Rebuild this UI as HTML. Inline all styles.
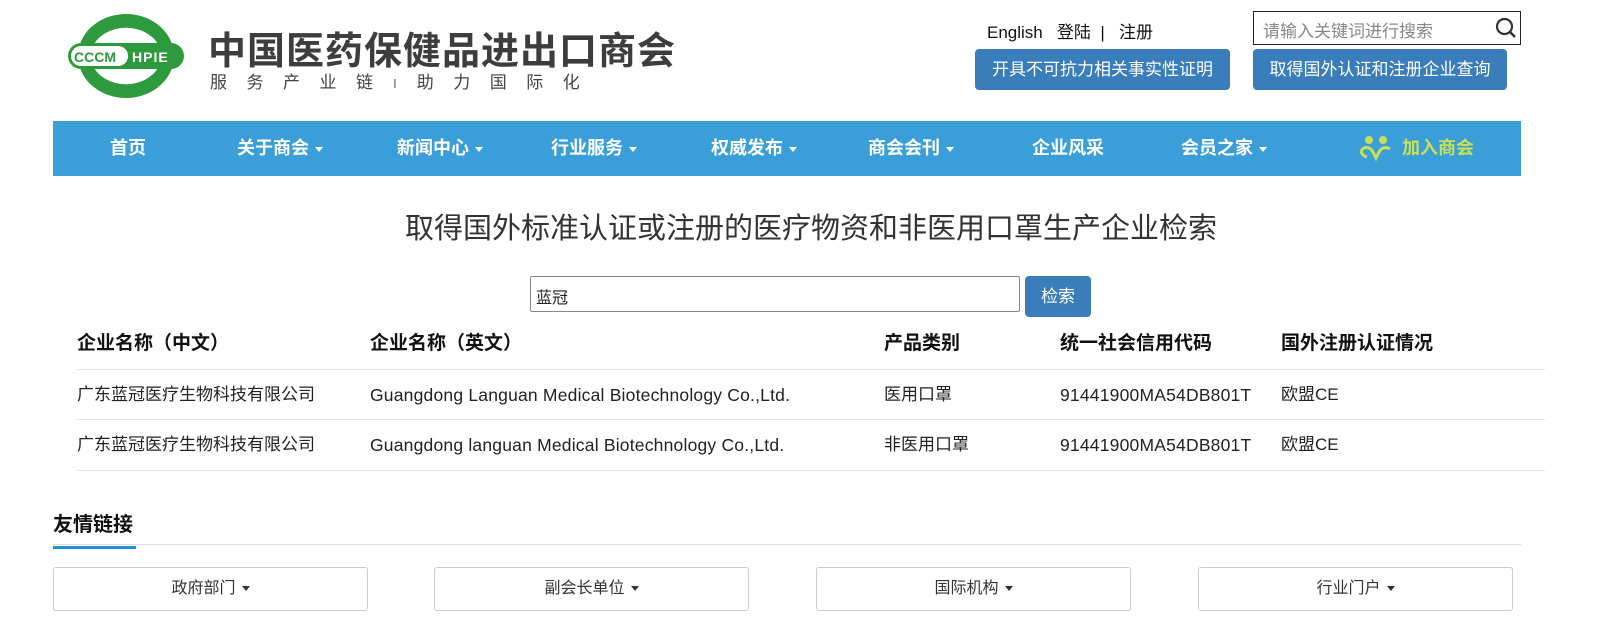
<!DOCTYPE html>
<html><head><meta charset="utf-8">
<style>
*{margin:0;padding:0;box-sizing:border-box}
body{width:1602px;height:630px;background:#fff;font-family:"Liberation Sans","Noto Sans CJK SC",sans-serif;color:#222;position:relative;overflow:hidden}
.a{position:absolute;white-space:nowrap}
.btn{position:absolute;background:#3a7dbb;color:#fff;border-radius:4px;font-size:17px;text-align:center;line-height:41px}
.nav{position:absolute;left:53px;top:121px;width:1468px;height:55px;background:#3a9fd9}
.nav span{position:absolute;top:0;line-height:55px;color:#fff;font-weight:bold;font-size:18px}
.car{display:inline-block;width:0;height:0;border-left:4px solid transparent;border-right:4px solid transparent;border-top:5px solid currentColor;vertical-align:middle;margin-left:6px}
.th{position:absolute;top:331px;font-weight:bold;font-size:19px;color:#111;line-height:26px}
.td{position:absolute;font-size:17px;color:#222;line-height:22px}
.en{font-size:17.5px;letter-spacing:0.2px}
.hl{position:absolute;left:77px;width:1468px;height:1px;background:#e6e6e6}
.lk{position:absolute;top:567px;width:315px;height:44px;border:1px solid #ccc;border-radius:3px;text-align:center;line-height:42px;font-size:16px;color:#333}
</style></head><body>
<svg class="a" style="left:66px;top:14px" width="120" height="84" viewBox="0 0 120 84">
<path d="M14 30 A48 42 0 0 1 106 30 L92 30 A36 30 0 0 0 28 30 Z" fill="#2e9a3e"/>
<path d="M14 54 A48 42 0 0 0 106 54 L92 54 A36 30 0 0 1 28 54 Z" fill="#2e9a3e"/>
<rect x="2" y="29" width="116" height="26" rx="13" fill="#2e9a3e"/>
<rect x="5" y="32" width="57" height="20" rx="10" fill="#fff"/>
<text x="8" y="48" font-family="Liberation Sans" font-weight="bold" font-size="14" fill="#2e9a3e">CCCM</text>
<text x="66" y="48" font-family="Liberation Sans" font-weight="bold" font-size="14" fill="#fff" letter-spacing="1">HPIE</text>
</svg>
<div class="a" style="left:208px;top:20px;font-size:38px;font-weight:bold;color:#3d3d3d;letter-spacing:1px">中国医药保健品进出口商会</div>
<div class="a" style="left:210px;top:68px;font-size:17px;color:#444;letter-spacing:19.5px">服务产业链<span style="color:#888">ı</span>助力国际化</div>

<div class="a" style="left:987px;top:18px;font-size:17px;color:#111">English&nbsp;&nbsp;&nbsp;登陆&nbsp;&nbsp;|&nbsp;&nbsp;&nbsp;注册</div>
<div class="a" style="left:1253px;top:11px;width:268px;height:34px;border:1px solid #222"></div>
<div class="a" style="left:1263px;top:17px;font-size:17px;color:#888">请输入关键词进行搜索</div>
<svg class="a" style="left:1495px;top:17px" width="22" height="22" viewBox="0 0 22 22"><circle cx="9.5" cy="9.5" r="7.5" fill="none" stroke="#333" stroke-width="2.2"/><path d="M15 15 L20 20" stroke="#333" stroke-width="2.6"/></svg>
<div class="btn" style="left:975px;top:49px;width:255px">开具不可抗力相关事实性证明</div>
<div class="btn" style="left:1253px;top:49px;width:254px">取得国外认证和注册企业查询</div>

<div class="nav">
<span style="left:57px">首页</span>
<span style="left:184px">关于商会<i class="car"></i></span>
<span style="left:344px">新闻中心<i class="car"></i></span>
<span style="left:498px">行业服务<i class="car"></i></span>
<span style="left:658px">权威发布<i class="car"></i></span>
<span style="left:815px">商会会刊<i class="car"></i></span>
<span style="left:979px">企业风采</span>
<span style="left:1128px">会员之家<i class="car"></i></span>
<svg class="a" style="left:1306px;top:14px" width="34" height="28" viewBox="0 0 34 28"><circle cx="10" cy="5" r="4" fill="#c8df56"/><circle cx="24" cy="5" r="4" fill="#c8df56"/><path d="M3 14 Q10 10 14 17 L17 23 L20 17 Q24 10 31 14" fill="none" stroke="#c8df56" stroke-width="3"/><path d="M3 14 Q1 20 8 22" fill="none" stroke="#c8df56" stroke-width="3"/></svg>
<span style="left:1349px;color:#c8df56">加入商会</span>
</div>

<div class="a" style="left:0;width:1622px;text-align:center;top:205px;font-size:29px;color:#333">取得国外标准认证或注册的医疗物资和非医用口罩生产企业检索</div>
<div class="a" style="left:530px;top:276px;width:490px;height:36px;border:1px solid #888;border-radius:2px"></div>
<div class="a" style="left:536px;top:284px;font-size:16px">蓝冠</div>
<div class="btn" style="left:1025px;top:276px;width:66px;line-height:41px;font-size:17px">检索</div>

<div class="th" style="left:77px">企业名称（中文）</div>
<div class="th" style="left:370px">企业名称（英文）</div>
<div class="th" style="left:884px">产品类别</div>
<div class="th" style="left:1060px">统一社会信用代码</div>
<div class="th" style="left:1281px">国外注册认证情况</div>
<div class="hl" style="top:369px"></div>
<div class="td" style="left:77px;top:384px">广东蓝冠医疗生物科技有限公司</div>
<div class="td en" style="left:370px;top:384px">Guangdong Languan Medical Biotechnology Co.,Ltd.</div>
<div class="td" style="left:884px;top:384px">医用口罩</div>
<div class="td en" style="left:1060px;top:384px">91441900MA54DB801T</div>
<div class="td" style="left:1281px;top:384px">欧盟CE</div>
<div class="hl" style="top:419px"></div>
<div class="td" style="left:77px;top:434px">广东蓝冠医疗生物科技有限公司</div>
<div class="td en" style="left:370px;top:434px">Guangdong languan Medical Biotechnology Co.,Ltd.</div>
<div class="td" style="left:884px;top:434px">非医用口罩</div>
<div class="td en" style="left:1060px;top:434px">91441900MA54DB801T</div>
<div class="td" style="left:1281px;top:434px">欧盟CE</div>
<div class="hl" style="top:470px"></div>

<div class="a" style="left:53px;top:508px;font-size:20px;font-weight:bold;color:#111">友情链接</div>
<div class="a" style="left:53px;top:544px;width:1468px;height:1px;background:#ddd"></div>
<div class="a" style="left:53px;top:546px;width:83px;height:3px;background:#1e8fd8"></div>
<div class="lk" style="left:53px">政府部门<i class="car"></i></div>
<div class="lk" style="left:434px">副会长单位<i class="car"></i></div>
<div class="lk" style="left:816px">国际机构<i class="car"></i></div>
<div class="lk" style="left:1198px">行业门户<i class="car"></i></div>
</body></html>
